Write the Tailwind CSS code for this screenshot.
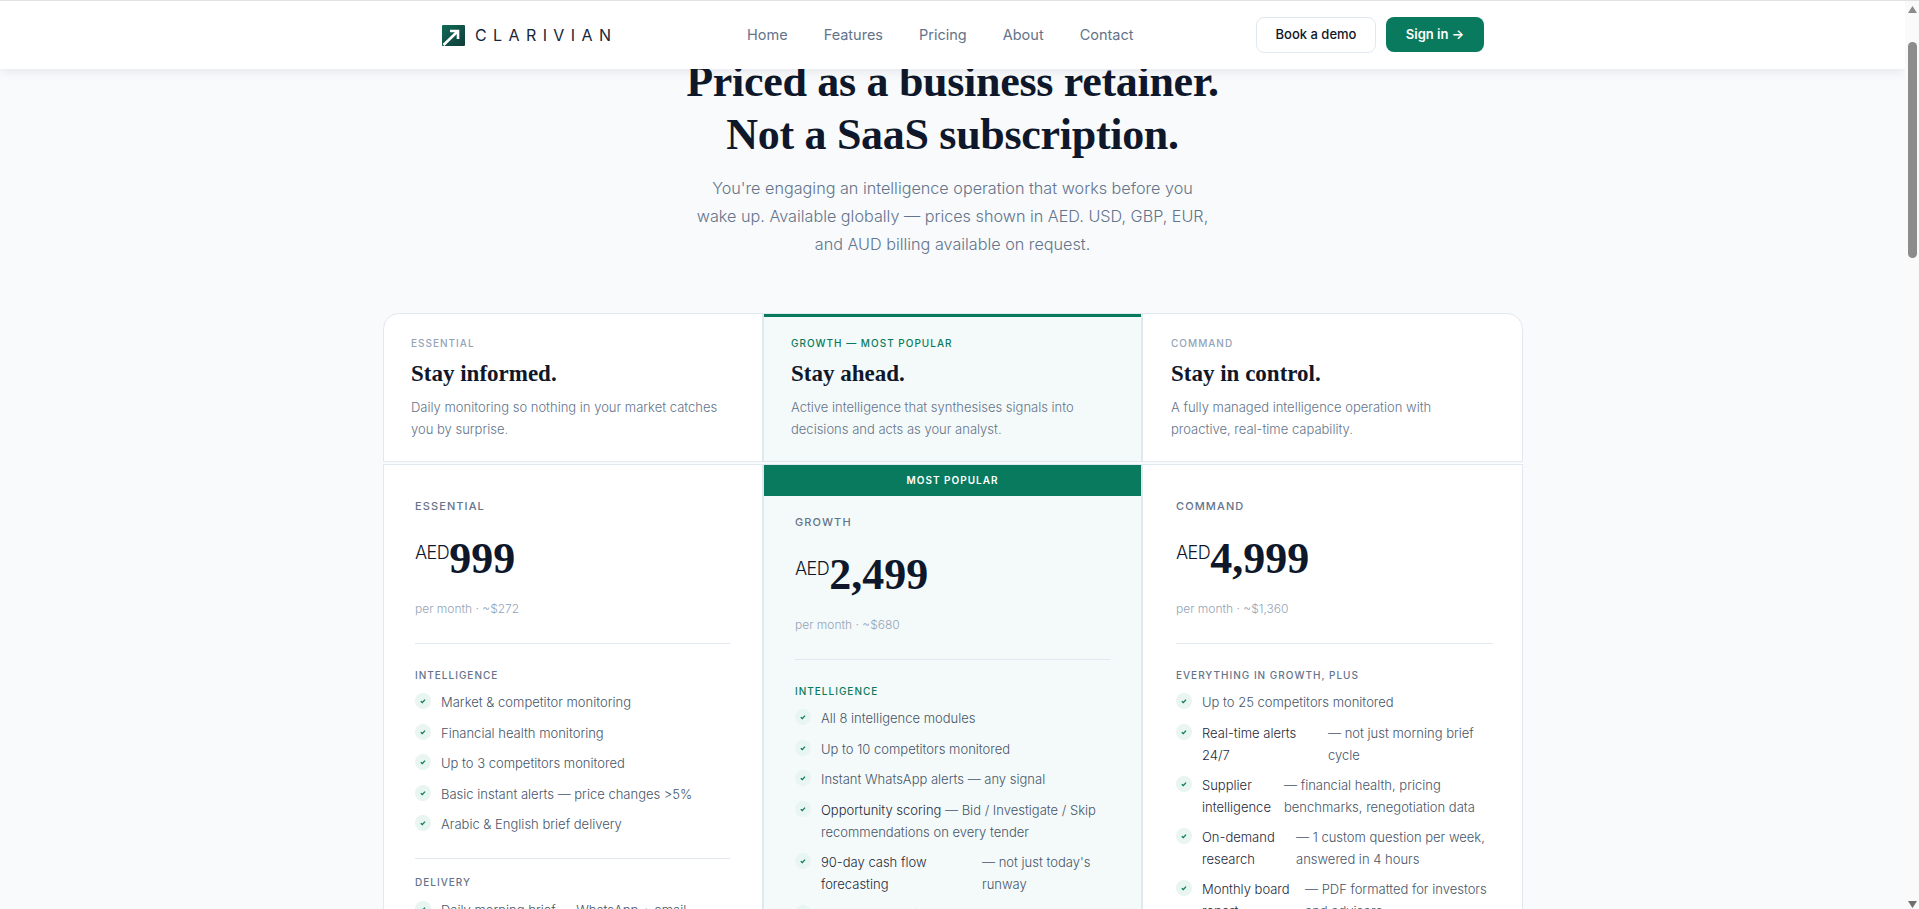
<!DOCTYPE html>
<html lang="en">
<head>
    <meta charset="UTF-8">
    <meta name="viewport" content="width=device-width, initial-scale=1.0">
    <title>Clarivian Pricing</title>
    <script src="https://cdn.jsdelivr.net/npm/@tailwindcss/browser@4"></script>
</head>
<body class="h-[909px] overflow-hidden bg-[#f8fafc] font-['Inter',sans-serif] text-[#0f172a]">
<div class="flex h-[909px]">
    <div class="relative w-[1905px] h-[909px] overflow-hidden">
        <!-- Nav -->
        <header class="absolute top-0 left-0 right-0 z-10 h-[69px] bg-white border-t border-[#e2e2e2] shadow-[0_1px_12px_rgba(15,23,42,0.10)]">
            <div class="flex items-center h-full pl-[442px] w-[1484px]">
                <a class="flex items-center gap-[10px] w-[305px]">
                    <svg width="23" height="21" viewBox="0 0 23 21">
                        <defs><linearGradient id="logo-bg" x1="0" y1="0" x2="1" y2="1"><stop offset="0" stop-color="#0f6b56"/><stop offset="1" stop-color="#123c3a"/></linearGradient></defs>
                        <rect width="23" height="21" rx="1" fill="url(#logo-bg)"/>
                        <path d="M1.5 20 L15 7" stroke="#fff" stroke-width="2.6" fill="none"/>
                        <path d="M8 6 H16 V14" stroke="#fff" stroke-width="2.6" fill="none"/>
                    </svg>
                    <span class="text-[16px] font-normal tracking-[0.4em] text-[#16263a]">CLARIVIAN</span>
                </a>
                <nav class="flex gap-[36px] text-[14.5px] text-[#64748b]">
                    <a>Home</a><a>Features</a><a>Pricing</a><a>About</a><a>Contact</a>
                </nav>
                <div class="flex gap-[10px] ml-auto">
                    <a class="flex items-center justify-center w-[120px] h-[36px] rounded-lg bg-white border border-[#e2e8f0] text-[13px] font-medium text-[#0f172a]">Book a demo</a>
                    <a class="flex items-center justify-center w-[98px] h-[35px] rounded-lg bg-[#0a7a5e] text-[13px] font-semibold text-white">Sign in →</a>
                </div>
            </div>
        </header>

        <!-- Hero -->
        <section class="pt-[55px] text-center">
            <h1 class="font-['Liberation_Serif',serif] font-bold text-[44px] leading-[53px] tracking-[-0.3px] text-[#0f172a]">Priced as a business retainer.<br>Not a SaaS subscription.</h1>
            <p class="mt-[13px] mx-auto w-[518px] text-[16.2px] font-light leading-[28px] text-[#64748b]">You're engaging an intelligence operation that works before you wake up. Available globally — prices shown in AED. USD, GBP, EUR, and AUD billing available on request.</p>
        </section>

        <!-- Plan summary row -->
        <section class="grid grid-cols-[378px_381px_379px] w-[1140px] ml-[383px] mt-[55px] h-[149px] bg-white border border-[#e2e8f0] rounded-t-2xl overflow-hidden">
            <div class="px-[27px] pt-[22px]">
                <div class="text-[10px] font-medium tracking-[0.1em] leading-[14px] text-[#94a3b8]">ESSENTIAL</div>
                <h3 class="mt-[9px] font-['Liberation_Serif',serif] font-bold text-[23px] leading-[30px]">Stay informed.</h3>
                <p class="mt-[7px] text-[13px] font-light leading-[22px] text-[#64748b]">Daily monitoring so nothing in your market catches you by surprise.</p>
            </div>
            <div class="bg-[#f4faf9] border-x-2 border-x-[#e2e8f0]">
                <div class="h-[3px] bg-[#0a7a5e]"></div>
                <div class="px-[27px] pt-[19px]">
                    <div class="text-[10px] font-medium tracking-[0.1em] leading-[14px] text-[#0a7a5e]">GROWTH — MOST POPULAR</div>
                    <h3 class="mt-[9px] font-['Liberation_Serif',serif] font-bold text-[23px] leading-[30px]">Stay ahead.</h3>
                    <p class="mt-[7px] text-[13px] font-light leading-[22px] text-[#64748b]">Active intelligence that synthesises signals into decisions and acts as your analyst.</p>
                </div>
            </div>
            <div class="pl-[28px] pr-[60px] pt-[22px]">
                <div class="text-[10px] font-medium tracking-[0.1em] leading-[14px] text-[#94a3b8]">COMMAND</div>
                <h3 class="mt-[9px] font-['Liberation_Serif',serif] font-bold text-[23px] leading-[30px]">Stay in control.</h3>
                <p class="mt-[7px] text-[13px] font-light leading-[22px] text-[#64748b]">A fully managed intelligence operation with proactive, real-time capability.</p>
            </div>
        </section>

        <!-- Pricing cards -->
        <section class="grid grid-cols-[378px_381px_379px] w-[1140px] ml-[383px] mt-[2px] h-[600px] bg-white border border-[#e2e8f0]">
            <!-- Essential -->
            <div class="pl-[31px] pr-[32px] pt-[33px]">
                <div class="text-[11px] font-medium tracking-[0.1em] leading-[16px] text-[#64748b]">ESSENTIAL</div>
                <div class="flex items-start mt-[21px] h-[48px] text-[#0f172a]">
                    <span class="mt-[6px] text-[18px] font-light leading-[24px] tracking-[-0.03em]">AED</span>
                    <span class="font-['Liberation_Serif',serif] font-bold text-[44px] leading-[48px]">999</span>
                </div>
                <div class="mt-[17px] text-[12px] font-light leading-[18px] text-[#94a3b8]">per month · ~$272</div>
                <div class="mt-[25px] border-t border-[#e2e8f0]"></div>
                <div class="mt-[24px] text-[10px] font-medium tracking-[0.1em] leading-[14px] text-[#64748b]">INTELLIGENCE</div>
                <ul class="mt-[9px] flex flex-col gap-[8px] text-[13px] font-light leading-[22px] text-[#475569]">
                    <li class="flex min-h-[22.5px]"><svg class="mt-[2px] mr-[10px] shrink-0" width="16" height="16" viewBox="0 0 16 16"><circle cx="8" cy="8" r="8" fill="#e8f5f0"/><path d="M5.8 8.2 L7.3 9.6 L10 6.6" stroke="#0a7a5e" stroke-width="1.3" fill="none"/></svg>Market &amp; competitor monitoring</li>
                    <li class="flex min-h-[22.5px]"><svg class="mt-[2px] mr-[10px] shrink-0" width="16" height="16" viewBox="0 0 16 16"><circle cx="8" cy="8" r="8" fill="#e8f5f0"/><path d="M5.8 8.2 L7.3 9.6 L10 6.6" stroke="#0a7a5e" stroke-width="1.3" fill="none"/></svg>Financial health monitoring</li>
                    <li class="flex min-h-[22.5px]"><svg class="mt-[2px] mr-[10px] shrink-0" width="16" height="16" viewBox="0 0 16 16"><circle cx="8" cy="8" r="8" fill="#e8f5f0"/><path d="M5.8 8.2 L7.3 9.6 L10 6.6" stroke="#0a7a5e" stroke-width="1.3" fill="none"/></svg>Up to 3 competitors monitored</li>
                    <li class="flex min-h-[22.5px]"><svg class="mt-[2px] mr-[10px] shrink-0" width="16" height="16" viewBox="0 0 16 16"><circle cx="8" cy="8" r="8" fill="#e8f5f0"/><path d="M5.8 8.2 L7.3 9.6 L10 6.6" stroke="#0a7a5e" stroke-width="1.3" fill="none"/></svg>Basic instant alerts — price changes &gt;5%</li>
                    <li class="flex min-h-[22.5px]"><svg class="mt-[2px] mr-[10px] shrink-0" width="16" height="16" viewBox="0 0 16 16"><circle cx="8" cy="8" r="8" fill="#e8f5f0"/><path d="M5.8 8.2 L7.3 9.6 L10 6.6" stroke="#0a7a5e" stroke-width="1.3" fill="none"/></svg>Arabic &amp; English brief delivery</li>
                </ul>
                <div class="mt-[22px] border-t border-[#e2e8f0]"></div>
                <div class="mt-[16px] text-[10px] font-medium tracking-[0.1em] leading-[14px] text-[#64748b]">DELIVERY</div>
                <ul class="mt-[10px] flex flex-col gap-[8px] text-[13px] font-light leading-[22px] text-[#475569]">
                    <li class="flex min-h-[22.5px]"><svg class="mt-[2px] mr-[10px] shrink-0" width="16" height="16" viewBox="0 0 16 16"><circle cx="8" cy="8" r="8" fill="#e8f5f0"/><path d="M5.8 8.2 L7.3 9.6 L10 6.6" stroke="#0a7a5e" stroke-width="1.3" fill="none"/></svg>Daily morning brief — WhatsApp + email</li>
                </ul>
            </div>
            <!-- Growth -->
            <div class="bg-[#f4faf9] border-x-2 border-x-[#e2e8f0]">
                <div class="flex items-center justify-center h-[31px] bg-[#0a7a5e] text-[10px] font-semibold tracking-[0.1em] text-white">MOST POPULAR</div>
                <div class="px-[31px] pt-[18px]">
                    <div class="text-[11px] font-medium tracking-[0.1em] leading-[16px] text-[#64748b]">GROWTH</div>
                    <div class="flex items-start mt-[21px] h-[48px] text-[#0f172a]">
                        <span class="mt-[6px] text-[18px] font-light leading-[24px] tracking-[-0.03em]">AED</span>
                        <span class="font-['Liberation_Serif',serif] font-bold text-[44px] leading-[48px]">2,499</span>
                    </div>
                    <div class="mt-[17px] text-[12px] font-light leading-[18px] text-[#94a3b8]">per month · ~$680</div>
                    <div class="mt-[25px] border-t border-[#e2e8f0]"></div>
                    <div class="mt-[24px] text-[10px] font-medium tracking-[0.1em] leading-[14px] text-[#0a7a5e]">INTELLIGENCE</div>
                    <ul class="mt-[9px] flex flex-col gap-[8px] text-[13px] font-light leading-[22px] text-[#475569]">
                        <li class="flex min-h-[22.5px]"><svg class="mt-[2px] mr-[10px] shrink-0" width="16" height="16" viewBox="0 0 16 16"><circle cx="8" cy="8" r="8" fill="#e8f5f0"/><path d="M5.8 8.2 L7.3 9.6 L10 6.6" stroke="#0a7a5e" stroke-width="1.3" fill="none"/></svg>All 8 intelligence modules</li>
                        <li class="flex min-h-[22.5px]"><svg class="mt-[2px] mr-[10px] shrink-0" width="16" height="16" viewBox="0 0 16 16"><circle cx="8" cy="8" r="8" fill="#e8f5f0"/><path d="M5.8 8.2 L7.3 9.6 L10 6.6" stroke="#0a7a5e" stroke-width="1.3" fill="none"/></svg>Up to 10 competitors monitored</li>
                        <li class="flex min-h-[22.5px]"><svg class="mt-[2px] mr-[10px] shrink-0" width="16" height="16" viewBox="0 0 16 16"><circle cx="8" cy="8" r="8" fill="#e8f5f0"/><path d="M5.8 8.2 L7.3 9.6 L10 6.6" stroke="#0a7a5e" stroke-width="1.3" fill="none"/></svg>Instant WhatsApp alerts — any signal</li>
                        <li class="flex min-h-[22.5px]"><svg class="mt-[2px] mr-[10px] shrink-0" width="16" height="16" viewBox="0 0 16 16"><circle cx="8" cy="8" r="8" fill="#e8f5f0"/><path d="M5.8 8.2 L7.3 9.6 L10 6.6" stroke="#0a7a5e" stroke-width="1.3" fill="none"/></svg><span><span class="text-[#1e293b]">Opportunity scoring</span> — Bid / Investigate / Skip recommendations on every tender</span></li>
                        <li class="flex min-h-[22.5px]"><svg class="mt-[2px] mr-[10px] shrink-0" width="16" height="16" viewBox="0 0 16 16"><circle cx="8" cy="8" r="8" fill="#e8f5f0"/><path d="M5.8 8.2 L7.3 9.6 L10 6.6" stroke="#0a7a5e" stroke-width="1.3" fill="none"/></svg><span class="w-[161px] shrink-0 text-[#1e293b]">90-day cash flow forecasting</span><span>— not just today's runway</span></li>
                        <li class="flex min-h-[22.5px]"><svg class="mt-[2px] mr-[10px] shrink-0" width="16" height="16" viewBox="0 0 16 16"><circle cx="8" cy="8" r="8" fill="#e8f5f0"/><path d="M5.8 8.2 L7.3 9.6 L10 6.6" stroke="#0a7a5e" stroke-width="1.3" fill="none"/></svg>Monthly strategic report — PDF</li>
                    </ul>
                </div>
            </div>
            <!-- Command -->
            <div class="pl-[33px] pr-[29px] pt-[33px]">
                <div class="text-[11px] font-medium tracking-[0.1em] leading-[16px] text-[#64748b]">COMMAND</div>
                <div class="flex items-start mt-[21px] h-[48px] text-[#0f172a]">
                    <span class="mt-[6px] text-[18px] font-light leading-[24px] tracking-[-0.03em]">AED</span>
                    <span class="font-['Liberation_Serif',serif] font-bold text-[44px] leading-[48px]">4,999</span>
                </div>
                <div class="mt-[17px] text-[12px] font-light leading-[18px] text-[#94a3b8]">per month · ~$1,360</div>
                <div class="mt-[25px] border-t border-[#e2e8f0]"></div>
                <div class="mt-[24px] text-[10px] font-medium tracking-[0.1em] leading-[14px] text-[#64748b]">EVERYTHING IN GROWTH, PLUS</div>
                <ul class="mt-[9px] flex flex-col gap-[8px] text-[13px] font-light leading-[22px] text-[#475569]">
                    <li class="flex min-h-[22.5px]"><svg class="mt-[2px] mr-[10px] shrink-0" width="16" height="16" viewBox="0 0 16 16"><circle cx="8" cy="8" r="8" fill="#e8f5f0"/><path d="M5.8 8.2 L7.3 9.6 L10 6.6" stroke="#0a7a5e" stroke-width="1.3" fill="none"/></svg>Up to 25 competitors monitored</li>
                    <li class="flex min-h-[22.5px]"><svg class="mt-[2px] mr-[10px] shrink-0" width="16" height="16" viewBox="0 0 16 16"><circle cx="8" cy="8" r="8" fill="#e8f5f0"/><path d="M5.8 8.2 L7.3 9.6 L10 6.6" stroke="#0a7a5e" stroke-width="1.3" fill="none"/></svg><span class="w-[126px] shrink-0 pr-[20px] text-[#1e293b]">Real-time alerts 24/7</span><span>— not just morning brief cycle</span></li>
                    <li class="flex min-h-[22.5px]"><svg class="mt-[2px] mr-[10px] shrink-0" width="16" height="16" viewBox="0 0 16 16"><circle cx="8" cy="8" r="8" fill="#e8f5f0"/><path d="M5.8 8.2 L7.3 9.6 L10 6.6" stroke="#0a7a5e" stroke-width="1.3" fill="none"/></svg><span class="w-[82px] shrink-0 text-[#1e293b]">Supplier intelligence</span><span>— financial health, pricing benchmarks, renegotiation data</span></li>
                    <li class="flex min-h-[22.5px]"><svg class="mt-[2px] mr-[10px] shrink-0" width="16" height="16" viewBox="0 0 16 16"><circle cx="8" cy="8" r="8" fill="#e8f5f0"/><path d="M5.8 8.2 L7.3 9.6 L10 6.6" stroke="#0a7a5e" stroke-width="1.3" fill="none"/></svg><span class="w-[94px] shrink-0 text-[#1e293b]">On-demand research</span><span>— 1 custom question per week, answered in 4 hours</span></li>
                    <li class="flex min-h-[22.5px]"><svg class="mt-[2px] mr-[10px] shrink-0" width="16" height="16" viewBox="0 0 16 16"><circle cx="8" cy="8" r="8" fill="#e8f5f0"/><path d="M5.8 8.2 L7.3 9.6 L10 6.6" stroke="#0a7a5e" stroke-width="1.3" fill="none"/></svg><span class="w-[103px] shrink-0 text-[#1e293b]">Monthly board report</span><span>— PDF formatted for investors and advisors</span></li>
                </ul>
            </div>
        </section>
    </div>
    <!-- Scrollbar -->
    <aside class="relative w-[14px] h-[909px] bg-[#fafafa] border-t border-[#e2e2e2]">
        <svg class="absolute left-[3px] top-[5px]" width="9" height="7" viewBox="0 0 9 7"><path d="M4.5 0 L9 7 H0 Z" fill="#8a8a8a"/></svg>
        <div class="absolute left-[3px] top-[41px] w-[9px] h-[216px] rounded-full bg-[#8c8c8c]"></div>
        <svg class="absolute left-[3px] bottom-[1px]" width="9" height="7" viewBox="0 0 9 7"><path d="M0 0 H9 L4.5 7 Z" fill="#6f6f6f"/></svg>
    </aside>
</div>
</body>
</html>
